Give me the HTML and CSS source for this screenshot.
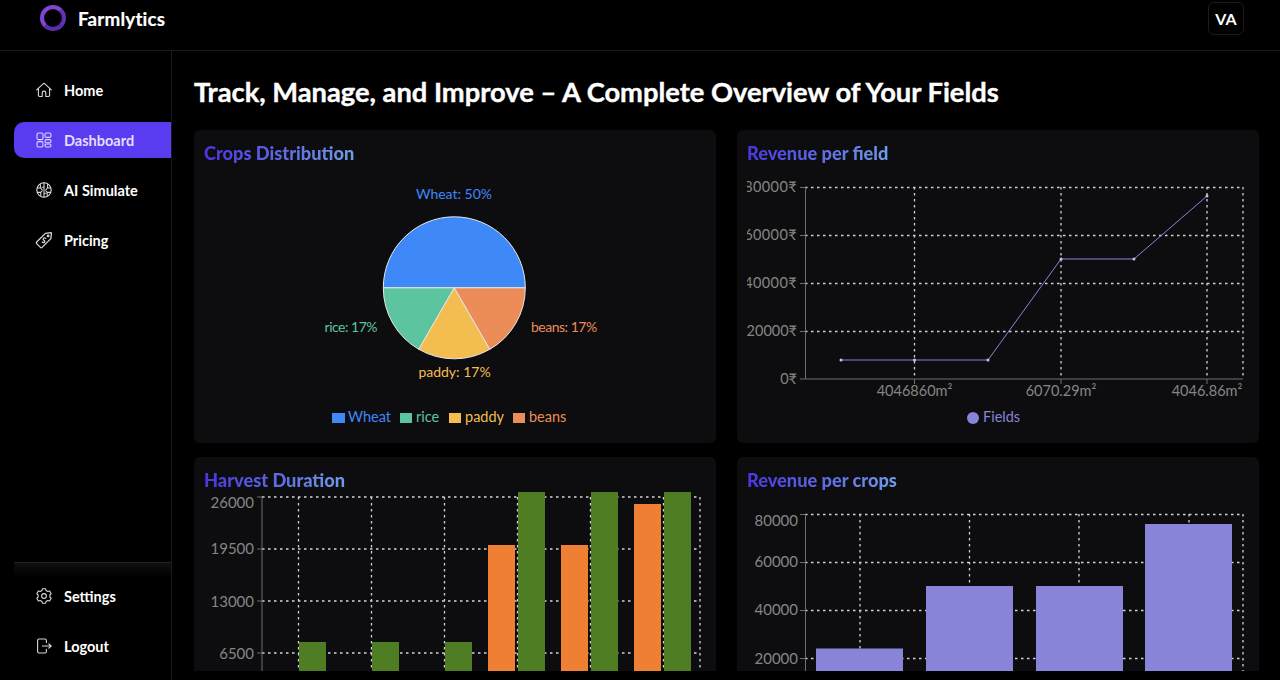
FILE: index.html
```html
<!DOCTYPE html>
<html lang="en">
<head>
    <meta charset="UTF-8">
    <meta name="viewport" content="width=device-width, initial-scale=1.0">
    <title>Farmlytics</title>
    <link rel="stylesheet" href="styles.css">
</head>
<body>
    <header class="topbar">
        <div class="brand">
            <span class="brand-ring"></span>
            <span class="brand-name">Farmlytics</span>
        </div>
        <div class="avatar">VA</div>
    </header>

    <div class="layout">
        <aside class="sidebar">
            <nav class="nav">
                <a class="nav-item" href="#">
                    <svg class="nav-icon" viewBox="0 0 16 16"><path d="M.6 7.800 8 1.200l7.400 6.600M2.400 6.400v6.900c0 .7.5 1.200 1.200 1.200h2.600v-3.600a1.800 1.800 0 0 1 3.600 0v3.600h2.600c.7 0 1.200-.5 1.200-1.200V6.400"/></svg>
                    Home
                </a>
                <a class="nav-item active" href="#">
                    <svg class="nav-icon" viewBox="0 0 16 16"><rect x="1" y="1" width="6" height="6.600" rx="1.400"/><rect x="9" y="1" width="6" height="4.400" rx="1.400"/><rect x="1" y="9.600" width="6" height="5.400" rx="1.400"/><rect x="9" y="7.600" width="6" height="3.200" rx="1.400"/><rect x="9" y="12" width="6" height="3" rx="1.400"/></svg>
                    Dashboard
                </a>
                <a class="nav-item" href="#">
                    <svg class="nav-icon" viewBox="0 0 16 16"><circle cx="8" cy="8" r="7.200"/><path d="M8 1v14M1.400 6h3.200l1.600 2M1.400 10.400h3.400L6 9M14.600 6h-3.200L9.800 8M14.600 10.400h-3.400L10 9M4.400 2.600v3.400M11.600 2.600v3.400M4.800 10.400v3M11.200 10.400v3M8 5.200H6.200M8 11.200h1.800"/></svg>
                    AI Simulate
                </a>
                <a class="nav-item" href="#">
                    <svg class="nav-icon" viewBox="1 1 14 14"><path d="M9.200 2.200 14 1.600c.3 0 .5.2.5.5l-.5 4.700-7.700 7.700c-.4.400-1 .4-1.400 0l-3.300-3.300c-.4-.4-.4-1 0-1.400z"/><circle cx="11.600" cy="4.400" r=".7"/><path d="M9.600 6.600C9 6 8 6 7.500 6.600S7.400 8 8 8.300s1 1.200.5 1.700-1.400.4-2-.2"/></svg>
                    Pricing
                </a>
            </nav>
            <div class="nav-bottom">
                <a class="nav-item" href="#">
                    <svg class="nav-icon" viewBox="0 0 16 16"><circle cx="8" cy="8" r="2.400"/><path d="M6.400.8h3.200l.5 1.800 1.700.9 1.800-.5 1.600 2.700-1.300 1.300v2l1.300 1.300-1.600 2.700-1.800-.5-1.700.9-.5 1.800H6.400l-.5-1.800-1.700-.9-1.800.5L.8 10.300 2.100 9V7L.8 5.700l1.600-2.700 1.800.5 1.700-.9z"/></svg>
                    Settings
                </a>
                <a class="nav-item" href="#">
                    <svg class="nav-icon" viewBox="0 0 16 16"><path d="M10.400 4.600V2.400c0-.8-.6-1.400-1.400-1.400H3c-.8 0-1.400.6-1.400 1.400v11.200c0 .8.6 1.400 1.400 1.400h6c.8 0 1.400-.6 1.400-1.400v-2.200"/><path d="M6.400 8h8.800M12.800 5.800 15.200 8l-2.400 2.200"/></svg>
                    Logout
                </a>
            </div>
        </aside>

        <main class="content">
            <h1 class="page-title">Track, Manage, and Improve – A Complete Overview of Your Fields</h1>

            <div class="charts">
                <section class="card">
                    <h2 class="card-title">Crops Distribution</h2>
                    <svg class="chart" viewBox="204 171 500 272">
                        <text class="pie-label fill-blue" x="454" y="199" text-anchor="middle">Wheat: 50%</text>
                        <text class="pie-label tight fill-green" x="377" y="332" text-anchor="end">rice: 17%</text>
                        <text class="pie-label fill-yellow" x="454.500" y="377" text-anchor="middle">paddy: 17%</text>
                        <text class="pie-label tight fill-orange" x="531" y="332">beans: 17%</text>
                        <path class="slice fill-blue" d="M454.300 287.800H383.300A71 71 0 0 1 525.300 287.800Z"/>
                        <path class="slice fill-green" d="M454.300 287.800H383.300A71 71 0 0 0 418.800 349.300Z"/>
                        <path class="slice fill-yellow" d="M454.300 287.800 418.800 349.300A71 71 0 0 0 489.800 349.300Z"/>
                        <path class="slice fill-orange" d="M454.300 287.800 489.800 349.300A71 71 0 0 0 525.300 287.800Z"/>
                        <rect class="fill-blue" x="332" y="413" width="13" height="10"/>
                        <text class="legend-label fill-blue" x="348" y="422">Wheat</text>
                        <rect class="fill-green" x="400" y="413" width="12" height="10"/>
                        <text class="legend-label fill-green" x="416" y="422">rice</text>
                        <rect class="fill-yellow" x="449" y="413" width="12" height="10"/>
                        <text class="legend-label fill-yellow" x="465" y="422">paddy</text>
                        <rect class="fill-orange" x="513" y="413" width="12" height="10"/>
                        <text class="legend-label fill-orange" x="529" y="422">beans</text>
                    </svg>
                </section>

                <section class="card">
                    <h2 class="card-title">Revenue per field</h2>
                    <svg class="chart" viewBox="747 171 500 272">
                        <path class="grid" d="M805 187.500H1243M805 235.500H1243M805 283.500H1243M805 331.500H1243M914.500 187V379M1061 187V379M1207 187V379M1243 187V379"/>
                        <path class="axis" d="M805.500 187V379H1243M800 187.500H805M800 235.500H805M800 283.500H805M800 331.500H805M800 379H805M914.500 379V384M1061 379V384M1207 379V384"/>
                        <text class="tick tick-wide" x="797" y="192" text-anchor="end">80000₹</text>
                        <text class="tick tick-wide" x="797" y="240" text-anchor="end">60000₹</text>
                        <text class="tick tick-wide" x="797" y="288" text-anchor="end">40000₹</text>
                        <text class="tick" x="797" y="336" text-anchor="end">20000₹</text>
                        <text class="tick" x="797" y="384" text-anchor="end">0₹</text>
                        <text class="tick" x="914.500" y="396" text-anchor="middle">4046860m²</text>
                        <text class="tick" x="1061" y="396" text-anchor="middle">6070.29m²</text>
                        <text class="tick" x="1207" y="396" text-anchor="middle">4046.86m²</text>
                        <polyline class="line" points="841,360 914.500,360 988,360 1061,259 1134,259 1207,196"/>
                        <circle class="dot" cx="841" cy="360" r="1.500"/>
                        <circle class="dot" cx="914.500" cy="360" r="1.500"/>
                        <circle class="dot" cx="988" cy="360" r="1.500"/>
                        <circle class="dot" cx="1061" cy="259" r="1.500"/>
                        <circle class="dot" cx="1134" cy="259" r="1.500"/>
                        <circle class="dot" cx="1207" cy="196" r="1.500"/>
                        <circle class="fill-purple" cx="973" cy="418" r="6"/>
                        <text class="legend-label fill-purple" x="983" y="422">Fields</text>
                    </svg>
                </section>

                <section class="card">
                    <h2 class="card-title">Harvest Duration</h2>
                    <svg class="chart chart-over" viewBox="204 498 500 272">
                        <path class="grid" d="M262 497H700M262 549H700M262 601H700M262 653H700M298.500 497V680M371.500 497V680M444.500 497V680M517.500 497V680M590.500 497V680M663.500 497V680M700 497V680"/>
                        <path class="axis" d="M262 497V680M257 497H262M257 549H262M257 601H262M257 653H262"/>
                        <text class="tick tick-lg" x="254" y="508" text-anchor="end">26000</text>
                        <text class="tick tick-lg" x="254" y="554" text-anchor="end">19500</text>
                        <text class="tick tick-lg" x="254" y="607" text-anchor="end">13000</text>
                        <text class="tick tick-lg" x="254" y="659" text-anchor="end">6500</text>
                        <rect class="bar-green" x="299" y="642" width="27" height="130"/>
                        <rect class="bar-green" x="372" y="642" width="27" height="130"/>
                        <rect class="bar-green" x="445" y="642" width="27" height="130"/>
                        <rect class="bar-orange" x="488" y="545" width="27" height="230"/>
                        <rect class="bar-green" x="518" y="492" width="27" height="280"/>
                        <rect class="bar-orange" x="561" y="545" width="27" height="230"/>
                        <rect class="bar-green" x="591" y="492" width="27" height="280"/>
                        <rect class="bar-orange" x="634" y="504" width="27" height="270"/>
                        <rect class="bar-green" x="664" y="492" width="27" height="280"/>
                    </svg>
                </section>

                <section class="card">
                    <h2 class="card-title">Revenue per crops</h2>
                    <svg class="chart" viewBox="747 498 500 272">
                        <path class="grid" d="M805 514.500H1243M805 562.500H1243M805 610.500H1243M805 658.500H1243M860 514V680M969.500 514V680M1079 514V680M1189 514V680M1243 514V680"/>
                        <path class="axis" d="M805.500 514V680M800 514.500H805M800 562.500H805M800 610.500H805M800 658.500H805"/>
                        <text class="tick tick-lg" x="798" y="526" text-anchor="end">80000</text>
                        <text class="tick tick-lg" x="798" y="567" text-anchor="end">60000</text>
                        <text class="tick tick-lg" x="798" y="615" text-anchor="end">40000</text>
                        <text class="tick tick-lg" x="798" y="664" text-anchor="end">20000</text>
                        <rect class="fill-purple" x="816" y="648.500" width="87" height="120"/>
                        <rect class="fill-purple" x="926" y="586" width="87" height="180"/>
                        <rect class="fill-purple" x="1036" y="586" width="87" height="180"/>
                        <rect class="fill-purple" x="1145" y="524" width="87" height="240"/>
                    </svg>
                </section>
            </div>
        </main>
    </div>
</body>
</html>
```

FILE: styles.css
```css
* {
    box-sizing: border-box;
}
html, body {
    height: 100%;
}
body {
    margin: 0;
    overflow: hidden;
    background-color: #000000;
    color: #ffffff;
    font-family: Lato, "Open Sans", sans-serif;
}

/* top bar */
.topbar {
    height: 51px;
    display: flex;
    justify-content: space-between;
    padding: 2px 36px 0 40px;
    border-bottom: 1px solid #1a1a1a;
}
.brand {
    display: flex;
    align-items: center;
    gap: 12px;
    height: 32px;
}
.brand-ring {
    width: 26px;
    height: 26px;
    border-radius: 50%;
    border: 4px solid #8245d2;
    border-bottom-color: #5a2ea8;
    border-right-color: #5f34b4;
    box-shadow: inset 0 0 2px #2a1255;
}
.brand-name {
    font-size: 18.800px;
    font-weight: 700;
    letter-spacing: 0.2px;
    -webkit-text-stroke: 0.2px #ffffff;
}
.avatar {
    width: 36px;
    height: 33px;
    display: flex;
    align-items: center;
    justify-content: center;
    border: 1px solid #1c1c1e;
    border-radius: 6px;
    font-size: 16px;
    font-weight: 700;
}

/* sidebar */
.layout {
    display: flex;
    height: 629px;
}
.sidebar {
    width: 172px;
    flex-shrink: 0;
    display: flex;
    flex-direction: column;
    justify-content: space-between;
    padding: 21px 0 16px 14px;
    border-right: 1px solid #1a1a1a;
}
.nav, .nav-bottom {
    display: flex;
    flex-direction: column;
    gap: 14px;
}
.nav-bottom {
    padding-top: 15px;
    border-top: 1px solid #222224;
    background: linear-gradient(#0f0f11, #000000 15px);
}
.nav-item {
    height: 36px;
    display: flex;
    align-items: center;
    gap: 12px;
    padding-left: 22px;
    color: #ffffff;
    text-decoration: none;
    font-size: 14.500px;
    font-weight: 700;
}
.nav-item.active {
    background-color: #5a3cf0;
    border-radius: 10px 0 0 10px;
    color: #e4ddff;
}
.nav-icon {
    width: 16px;
    height: 16px;
    flex-shrink: 0;
    overflow: visible;
    fill: none;
    stroke: #d8d8d8;
    stroke-width: 1.100;
    stroke-linecap: round;
    stroke-linejoin: round;
}
.active .nav-icon {
    stroke: #dcd4ff;
}

/* main area */
.content {
    flex: 1;
    min-width: 0;
    display: flex;
    flex-direction: column;
    padding: 23px 21px 9px 22px;
}
.page-title {
    margin: 0 0 21px;
    font-size: 27.300px;
    line-height: 35px;
    font-weight: 700;
    -webkit-text-stroke: 0.4px #ffffff;
}
.charts {
    flex: 1;
    min-height: 0;
    overflow: hidden;
    display: grid;
    grid-template-columns: 1fr 1fr;
    grid-auto-rows: 313px;
    gap: 14px 21px;
}
.card {
    padding: 11px 10px 0;
    background-color: #0d0d10;
    border-radius: 6px;
}
.card-title {
    width: fit-content;
    margin: 0 0 6px;
    font-size: 18.200px;
    line-height: 24px;
    font-weight: 900;
    background: linear-gradient(90deg, #4a35e0, #6f9ce8);
    -webkit-background-clip: text;
    background-clip: text;
    color: transparent;
}
.chart {
    display: block;
    width: 500px;
    height: 272px;
}
.chart-over {
    overflow: visible;
}

/* chart parts */
.pie-label {
    font-size: 14px;
}
.tight {
    letter-spacing: -0.5px;
}
.legend-label {
    font-size: 14.500px;
}
.tick {
    fill: #858585;
    font-size: 14.500px;
}
.tick-wide {
    letter-spacing: 0.4px;
}
.tick-lg {
    font-size: 15px;
}
.slice {
    stroke: #e8e8e8;
    stroke-width: 1;
}
.grid {
    fill: none;
    stroke: #d4d4d4;
    stroke-width: 1.300;
    stroke-dasharray: 2.500 3.500;
}
.axis {
    fill: none;
    stroke: #707070;
}
.line {
    fill: none;
    stroke: #8884d8;
}
.dot {
    fill: #c4c2ee;
}
.fill-blue { fill: #3f88f8; }
.fill-green { fill: #5dc4a0; }
.fill-yellow { fill: #f3bd50; }
.fill-orange { fill: #ec8c58; }
.fill-purple { fill: #8884d8; }
.bar-green { fill: #4e7d24; }
.bar-orange { fill: #ef8033; }
```
